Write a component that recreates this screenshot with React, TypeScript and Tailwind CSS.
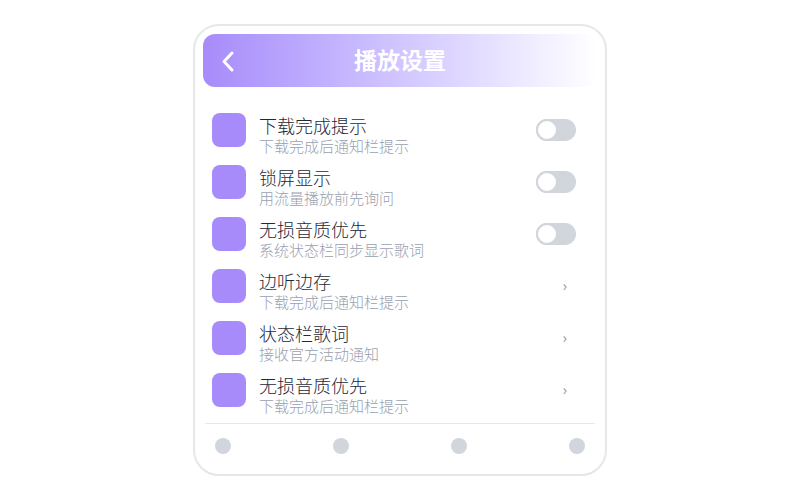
import React from 'react';

const rows = [
  { title: '下载完成提示', sub: '下载完成后通知栏提示', kind: 'toggle' },
  { title: '锁屏显示', sub: '用流量播放前先询问', kind: 'toggle' },
  { title: '无损音质优先', sub: '系统状态栏同步显示歌词', kind: 'toggle' },
  { title: '边听边存', sub: '下载完成后通知栏提示', kind: 'link' },
  { title: '状态栏歌词', sub: '接收官方活动通知', kind: 'link' },
  { title: '无损音质优先', sub: '下载完成后通知栏提示', kind: 'link' },
];

export default function App() {
  return (
    <div
      className="w-[800px] h-[500px] bg-white flex items-center justify-center"
      style={{ fontFamily: '"Noto Sans", "Noto Sans CJK SC", sans-serif' }}
    >
      <div className="w-[414px] h-[452px] border-2 border-gray-200 rounded-[26px] bg-white p-2 flex flex-col">
        {/* Header */}
        <div className="relative h-[53px] rounded-xl bg-linear-to-r from-[#a78bfa] to-white flex items-center justify-center">
          <svg className="absolute left-[18px] top-[17px]" width="14" height="21" viewBox="0 0 14 21" fill="none">
            <path d="M11 2 L3 10.5 L11 19" stroke="white" strokeWidth="3" strokeLinecap="round" strokeLinejoin="round" />
          </svg>
          <span className="text-white text-[23px] font-bold">播放设置</span>
        </div>

        {/* Rows */}
        <div className="mt-[17px] flex flex-col">
          {rows.map((r, i) => (
            <div key={i} className="h-[52px] flex items-center pl-[9px] pr-[21px]">
              <div className="w-[34px] h-[34px] rounded-lg bg-[#a78bfa] shrink-0" />
              <div className="ml-[13px] mt-[10px] flex-1 flex flex-col">
                <span className="text-[18px] leading-[22px] font-light text-gray-800">{r.title}</span>
                <span className="text-[15px] leading-[18px] font-light text-gray-400">{r.sub}</span>
              </div>
              {r.kind === 'toggle' ? (
                <div className="w-10 h-[22px] rounded-full bg-gray-300">
                  <div className="w-[22px] h-[22px] rounded-full bg-white border-2 border-gray-300" />
                </div>
              ) : (
                <span className="text-sm text-gray-400 mr-[9px]">›</span>
              )}
            </div>
          ))}
        </div>

        {/* Footer */}
        <div className="mt-[7px] mx-[2px] h-px bg-gray-200" />
        <div className="pt-[14px] px-3 flex justify-between">
          <div className="w-4 h-4 rounded-full bg-gray-300" />
          <div className="w-4 h-4 rounded-full bg-gray-300" />
          <div className="w-4 h-4 rounded-full bg-gray-300" />
          <div className="w-4 h-4 rounded-full bg-gray-300" />
        </div>
      </div>
    </div>
  );
}
